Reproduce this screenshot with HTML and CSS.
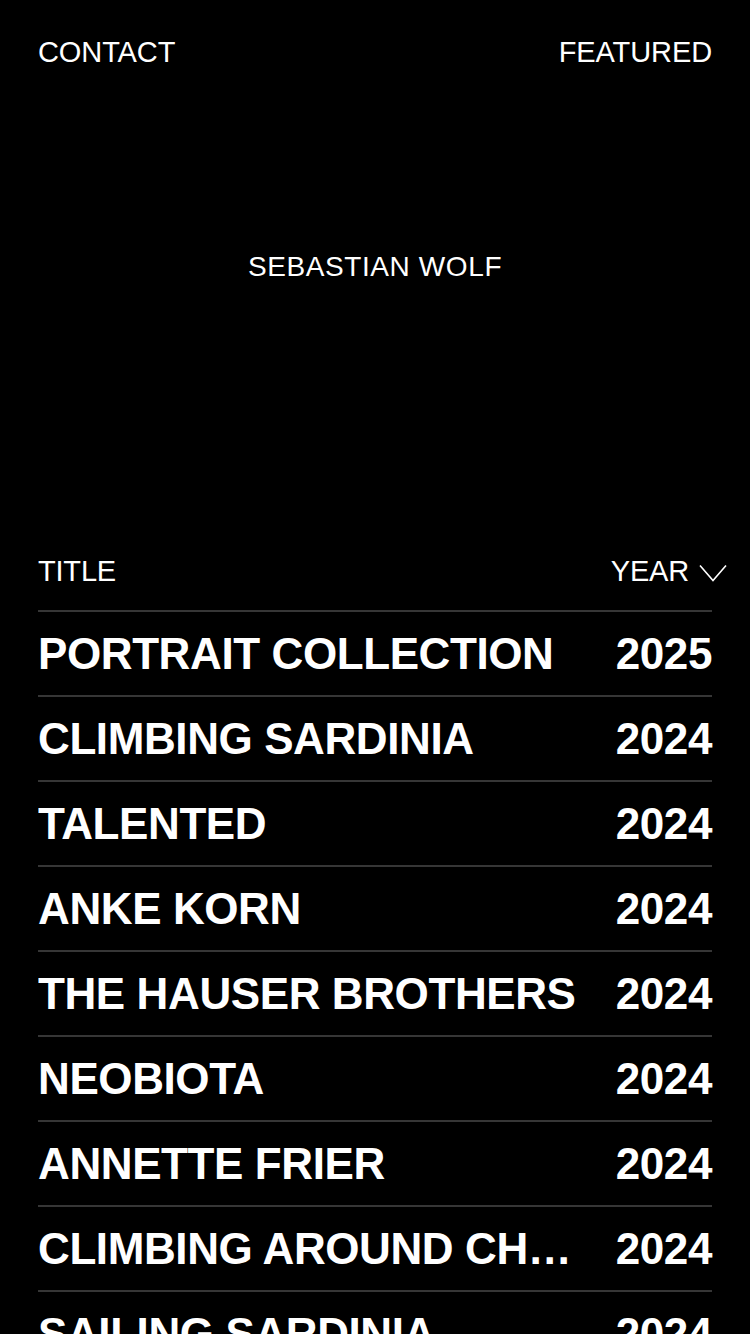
FILE: index.html
```html
<!DOCTYPE html>
<html lang="en">
<head>
    <meta charset="UTF-8">
    <meta name="viewport" content="width=device-width, initial-scale=1.0">
    <title>Sebastian Wolf</title>
    <link rel="stylesheet" href="styles.css">
</head>
<body>
    <div class="page">
      <nav class="top-nav">
        <a href="#">CONTACT</a>
        <a href="#">FEATURED</a>
      </nav>

      <h1 class="name">SEBASTIAN WOLF</h1>

      <div class="list-head">
        <span>TITLE</span>
        <span class="sort">YEAR
          <svg class="chevron" width="28" height="18" viewBox="0 0 28 18">
            <path d="M1 1.5 L14 16.5 L27 1.5" fill="none" stroke="#fff" stroke-width="1.6"/>
          </svg>
        </span>
      </div>

      <ul class="projects">
        <li><span class="title">PORTRAIT COLLECTION</span><span class="year">2025</span></li>
        <li><span class="title">CLIMBING SARDINIA</span><span class="year">2024</span></li>
        <li><span class="title">TALENTED</span><span class="year">2024</span></li>
        <li><span class="title">ANKE KORN</span><span class="year">2024</span></li>
        <li><span class="title">THE HAUSER BROTHERS</span><span class="year">2024</span></li>
        <li><span class="title">NEOBIOTA</span><span class="year">2024</span></li>
        <li><span class="title">ANNETTE FRIER</span><span class="year">2024</span></li>
        <li><span class="title">CLIMBING AROUND CHAMONIX</span><span class="year">2024</span></li>
        <li><span class="title">SAILING SARDINIA</span><span class="year">2024</span></li>
      </ul>
    </div>
</body>
</html>
```

FILE: styles.css
```css
body {
  margin: 0;
  background: #000;
  color: #fff;
  font-family: 'Liberation Sans', Arial, sans-serif;
}

.page {
  padding: 35px 38px 0;
}

.top-nav {
  display: flex;
  justify-content: space-between;
  font-size: 29px;
  line-height: 35px;
  letter-spacing: -0.1px;
}

.top-nav a {
  color: #fff;
  text-decoration: none;
}

.name {
  margin: 180px 0 0;
  text-align: center;
  font-size: 28px;
  font-weight: normal;
  line-height: 34px;
  letter-spacing: 0.6px;
}

.list-head {
  display: flex;
  justify-content: space-between;
  margin-top: 270px;
  padding-bottom: 21px;
  font-size: 29px;
  line-height: 35px;
  letter-spacing: -0.2px;
}

.sort {
  display: flex;
  align-items: center;
  gap: 10px;
  margin-right: -15px;
}

.chevron {
  display: block;
  margin-top: 2px;
}

.projects {
  list-style: none;
  margin: 0;
  padding: 0;
}

.projects li {
  display: flex;
  justify-content: space-between;
  align-items: center;
  gap: 32px;
  height: 83px;
  border-top: 2px solid #363636;
  font-size: 44px;
  font-weight: bold;
  letter-spacing: -0.4px;
}

.title {
  flex: 1;
  min-width: 0;
  white-space: nowrap;
  overflow: hidden;
  text-overflow: ellipsis;
}

.year {
  flex-shrink: 0;
}
```
